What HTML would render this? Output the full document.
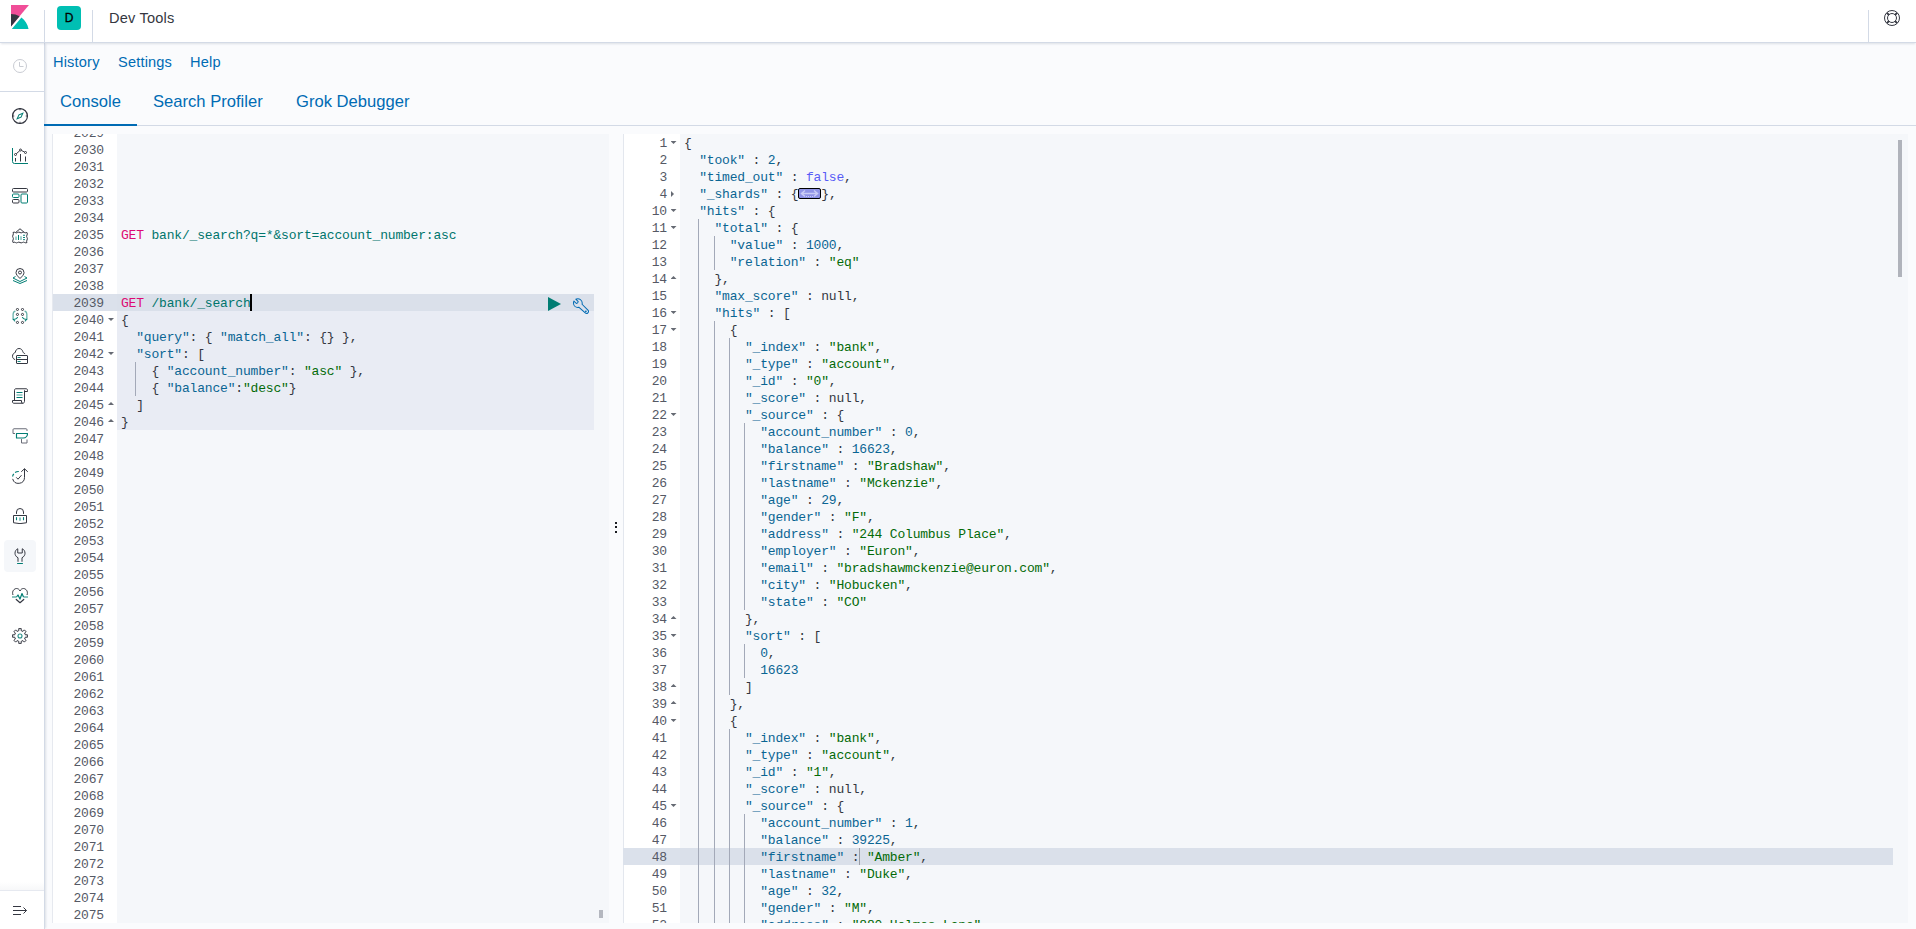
<!DOCTYPE html><html><head><meta charset="utf-8"><title>Dev Tools</title><style>
*{box-sizing:border-box;margin:0;padding:0}
html,body{width:1916px;height:929px;overflow:hidden;background:#fafbfd;font-family:"Liberation Sans",sans-serif;color:#343741}
.abs{position:absolute}
#hdr{position:absolute;left:0;top:0;width:1916px;height:43px;background:#fff;border-bottom:1px solid #d3dae6;box-shadow:0 2px 2px -1px rgba(152,162,179,.3);z-index:5}
.vsep{position:absolute;top:10px;width:1px;height:32px;background:#d3dae6}
#avatar{position:absolute;left:57px;top:6px;width:24px;height:24px;border-radius:4px;background:#00bfb3;color:#000;-webkit-text-stroke:.3px #000;font-size:12px;line-height:24px;text-align:center}
#title{position:absolute;left:109px;top:9px;letter-spacing:.18px;font-size:14.6px;line-height:18px;color:#343741;white-space:nowrap}
#side{position:absolute;left:0;top:43px;width:45px;height:886px;background:#fff;border-right:1px solid #d3dae6;box-shadow:2px 0 2px -1px rgba(152,162,179,.3);z-index:4}
.hline{position:absolute;left:0;width:44px;height:1px;background:#d3dae6}
.ico{position:absolute;left:12px;width:16px;height:16px}
.ico svg{display:block;width:16px;height:16px}
#selbg{position:absolute;left:4px;top:497px;width:32px;height:32px;border-radius:4px;background:#f5f7fa}
.lnk{position:absolute;top:53px;letter-spacing:.17px;font-size:14.6px;line-height:18px;color:#006bb4;white-space:nowrap}
.tab{position:absolute;top:92px;font-size:16.6px;line-height:20px;color:#006bb4;white-space:nowrap}
#tabline{position:absolute;left:45px;top:125px;width:1871px;height:1px;background:#d3dae6}
#tabsel{position:absolute;z-index:6;left:44px;top:124px;width:93px;height:2px;background:#006bb4}
.mono{font-family:"Liberation Mono",monospace;font-size:13px;letter-spacing:-0.18px;line-height:17px;white-space:pre}
.ed{position:absolute;overflow:hidden;background:#f5f7fa}
.gut{position:absolute;left:0;top:0;bottom:0;background:#fff}
.ln{position:absolute;height:17px;text-align:right;color:#555965;margin-top:1px}
.row{position:absolute;height:17px;color:#343741;margin-top:1px}
.hl{position:absolute;height:17px}
.guide{position:absolute;width:1px;background:#a3a9b8}
.fa{position:absolute;background:#666a73}
.fa.d{width:6px;height:3px;clip-path:polygon(0 0,100% 0,50% 100%)}
.fa.u{width:6px;height:3px;clip-path:polygon(0 100%,100% 100%,50% 0)}
.fa.r{width:3px;height:6px;clip-path:polygon(0 0,100% 50%,0 100%)}
.m{color:#dd0a73}.u{color:#00756c}.k{color:#0a6593}.s{color:#036a07}.n{color:#0a6593}.b{color:#585cf6}.p{color:#343741}
</style></head><body>
<div id="hdr">
<div class="abs" style="left:11px;top:5px;width:18px;height:24px"><svg viewBox="4 0 25 32" width="18" height="24" preserveAspectRatio="none"><path fill="#f04e98" d="M4 0v28.789L28.935.017z"/><path fill="#343741" d="M4 12v16.789l11.906-13.738A24.721 24.721 0 0 0 4 12"/><path fill="#00bfb3" d="M18.479 16.664L6.268 30.754l-1.073 1.237h23.191c-1.252-6.292-4.883-11.719-9.908-15.327"/></svg></div>
<div class="vsep" style="left:44px"></div>
<div id="avatar">D</div>
<div class="vsep" style="left:92px"></div>
<div id="title">Dev Tools</div>
<div class="vsep" style="left:1868px"></div>
<div class="abs" style="left:1884px;top:10px;width:16px;height:16px"><svg viewBox="0 0 16 16" width="16" height="16" fill="none" stroke="#343741" stroke-width="1"><circle cx="8" cy="8" r="7.5"/><circle cx="8" cy="8" r="4.5"/><path stroke-width="2" d="M2.9 2.9l2 2M13.1 2.9l-2 2M2.9 13.1l2-2M13.1 13.1l-2-2"/></svg></div>
</div>
<div id="side">
<div class="ico" style="top:15px;left:12px"><svg viewBox="0 0 16 16" fill="none" stroke="#c9ccd3" stroke-width="1"><circle cx="8" cy="8" r="6.5"/><path d="M7.5 4v4.5h4"/></svg></div>
<div class="hline" style="top:48px"></div>
<div id="selbg"></div>
<div class="ico" style="top:65px"><svg viewBox="0 0 32 32" ><g fill="none" stroke-width="2" stroke-linecap="butt" stroke-linejoin="round" stroke="#343741" ><circle cx="16" cy="16" r="14.900" stroke-width="2.300"/><path d="M16 1v3.500M16 27.500v3.500M1 16h3.500M27.500 16h3.500"/></g><path fill="#017d73" fill-rule="evenodd" d="M8.33 23.67l4.79-10.55 10.55-4.79-4.790 10.55-10.55 4.790zm6.300-9l-2.280 5 5-2.280 2.280-5-5 2.280z"/></svg></div>
<div class="ico" style="top:105px"><svg viewBox="0 0 32 32" ><g fill="none" stroke-width="2" stroke-linecap="butt" stroke-linejoin="round" stroke="#017d73" ><path d="M1 0v27a4 4 0 0 0 4 4h27"/></g><g fill="none" stroke-width="2" stroke-linecap="butt" stroke-linejoin="round" stroke="#343741" ><path d="M7 20v7M17 12v15M27 17v10"/><circle cx="7" cy="13" r="2"/><circle cx="17" cy="4" r="2"/><circle cx="27" cy="9" r="2"/><path d="M8.5 11.5l7-6M19 5l6.2 3.2"/></g></svg></div>
<div class="ico" style="top:145px"><svg viewBox="0 0 32 32" ><g fill="none" stroke-width="2" stroke-linecap="butt" stroke-linejoin="round" stroke="#343741" ><rect x="1" y="1" width="30" height="7" rx="2"/><rect x="1" y="23" width="13" height="7" rx="2"/></g><g fill="none" stroke-width="2" stroke-linecap="butt" stroke-linejoin="round" stroke="#017d73" ><rect x="1" y="12" width="13" height="7" rx="2"/><rect x="18" y="12" width="13" height="18" rx="2"/></g></svg></div>
<div class="ico" style="top:185px"><svg viewBox="0 0 32 32" ><g fill="none" stroke-width="2" stroke-linecap="butt" stroke-linejoin="round" stroke="#343741" ><path d="M8 8.500L16 1.500l8 7" stroke-linecap="round"/><path d="M2 9Q4.33 7.40 6.67 9.00Q9.00 10.60 11.33 9.00Q13.67 7.40 16.00 9.00Q18.33 10.60 20.67 9.00Q23.00 7.40 25.33 9.00Q27.67 10.60 30.00 9.00Q31.60 11.50 30.00 14.00Q28.40 16.50 30.00 19.00Q31.60 21.50 30.00 24.00Q28.40 26.50 30.00 29.00Q27.67 30.60 25.33 29.00Q23.00 27.40 20.67 29.00Q18.33 30.60 16.00 29.00Q13.67 27.40 11.33 29.00Q9.00 30.60 6.67 29.00Q4.33 27.40 2.00 29.00Q0.40 26.50 2.00 24.00Q3.60 21.50 2.00 19.00Q0.40 16.50 2.00 14.00Q3.60 11.50 2.00 9.00z" stroke-width="2"/></g><g fill="none" stroke-width="2" stroke-linecap="butt" stroke-linejoin="round" stroke="#017d73" ><path d="M8 17v7M18 16.500v7.500" stroke-opacity=".5" stroke-width="2.800"/><path d="M13 14v10" stroke-width="2"/><path d="M22 14.500h4M22 19h4M22 23.300h4" stroke-width="1.900"/></g></svg></div>
<div class="ico" style="top:225px"><svg viewBox="0 0 32 32" ><g fill="none" stroke-width="2" stroke-linecap="butt" stroke-linejoin="round" stroke="#343741" ><path d="M16 21c-5-5-8-8-8-12a8 8 0 0 1 16 0c0 4-3 7-8 12z"/><circle cx="16" cy="9" r="3"/></g><g fill="none" stroke-width="2" stroke-linecap="butt" stroke-linejoin="round" stroke="#017d73" ><path d="M7 17l-5 3 14 7 14-7-5-3"/><path d="M2 25l14 6 14-6"/></g></svg></div>
<div class="ico" style="top:265px"><svg viewBox="0 0 32 32" ><g fill="none" stroke-width="2" stroke-linecap="butt" stroke-linejoin="round" stroke="#343741" stroke-width="1.900"><circle cx="10.9" cy="2.9" r="2.100"/><circle cx="10.9" cy="12.9" r="2.100"/><circle cx="10.9" cy="28.9" r="2.100"/><circle cx="21" cy="2.9" r="2.100"/><circle cx="21" cy="12.9" r="2.100"/><circle cx="21" cy="28.9" r="2.100"/></g><g fill="none" stroke-width="2" stroke-linecap="butt" stroke-linejoin="round" stroke="#017d73" stroke-width="2.200"><g ><path d="M6 6.300Q2.200 8 2.200 12V22" stroke-opacity=".6" stroke-width="2.600" stroke-linecap="round"/><path d="M2.300 22.500L5.500 26M3.300 23Q8.500 22.500 11 19" stroke-linecap="round" stroke-width="2.200"/></g><g transform="translate(31.900 0) scale(-1 1)"><path d="M6 6.300Q2.200 8 2.200 12V22" stroke-opacity=".6" stroke-width="2.600" stroke-linecap="round"/><path d="M2.300 22.500L5.500 26M3.300 23Q8.500 22.500 11 19" stroke-linecap="round" stroke-width="2.200"/></g></g></svg></div>
<div class="ico" style="top:305px"><svg viewBox="0 0 32 32" ><g fill="none" stroke-width="2" stroke-linecap="butt" stroke-linejoin="round" stroke="#343741" ><path d="M5.500 23C2.500 22 1 19.500 1 16.500 1 12.500 3.500 10 6.500 9 7 4.500 10 1 14 1c4 0 6.500 2.500 7.500 6 .5 2 2 3.500 4 4.200" stroke-linecap="round"/><rect x="9" y="15" width="22" height="16" rx="1"/><path d="M9 23h22"/></g><g fill="none" stroke-width="2" stroke-linecap="butt" stroke-linejoin="round" stroke="#017d73" ><path d="M12 19h4.500M12 27h4.500" stroke-linecap="round" stroke-width="1.800"/></g></svg></div>
<div class="ico" style="top:345px"><svg viewBox="0 0 32 32" ><g fill="none" stroke-width="2" stroke-linecap="butt" stroke-linejoin="round" stroke="#343741" ><path d="M5 25V4.500c0-2 1-3 3-3h20c2 0 3 1 3 3V7h-6M25 4.500V27c0 2-1.500 3.500-3.500 3.500H4c-2 0-3-1-3-2.500V25h18v3c0 1.500 1 2.500 2.500 2.500"/></g><g fill="none" stroke-width="2" stroke-linecap="butt" stroke-linejoin="round" stroke="#017d73" ><path d="M9 9h12M9 19h12"/><path d="M9 14h12" stroke-opacity=".55" stroke-width="2.600"/></g></svg></div>
<div class="ico" style="top:385px"><svg viewBox="0 0 32 32" ><g fill="none" stroke-width="2" stroke-linecap="butt" stroke-linejoin="round" stroke="#6a6d78" ><path d="M6 11H2V3.500a2 2 0 0 1 2-2h24a2 2 0 0 1 2 2V6"/><path d="M19 22v8h11v-7"/></g><g fill="none" stroke-width="2" stroke-linecap="butt" stroke-linejoin="round" stroke="#017d73" ><path d="M9 11h22c0 5-3.500 9-8.500 9H9z" stroke-width="2.300"/></g></svg></div>
<div class="ico" style="top:425px"><svg viewBox="0 0 32 32" ><g fill="none" stroke-width="2" stroke-linecap="butt" stroke-linejoin="round" stroke="#343741" ><path d="M25 1.500V19A12 12 0 0 1 1.400 21.800M18.500 7.500L25 1.500l6.500 6"/><path d="M8.500 18.700l3.500 3.700 7-8"/></g><g fill="none" stroke-width="2" stroke-linecap="butt" stroke-linejoin="round" stroke="#017d73" ><path d="M1.200 17A12 12 0 0 1 3.600 11.800M6.200 9A12 12 0 0 1 13.600 7" stroke-width="2.400"/></g></svg></div>
<div class="ico" style="top:465px"><svg viewBox="0 0 32 32" ><g fill="none" stroke-width="2" stroke-linecap="butt" stroke-linejoin="round" stroke="#343741" ><path d="M9 11V8a7 7 0 0 1 14 0v3" stroke-linecap="round"/><path d="M3 15h26v14.500q-13 3.500-26 0z"/></g><g fill="none" stroke-width="2" stroke-linecap="butt" stroke-linejoin="round" stroke="#017d73" ><path d="M9 19v4.500M23 19v4.500" stroke-linecap="round" stroke-width="2.200"/><path d="M16 19v6.500" stroke-opacity=".55" stroke-width="3.400"/></g></svg></div>
<div class="ico" style="top:505px"><svg viewBox="0 0 32 32" ><g fill="none" stroke-width="2" stroke-linecap="butt" stroke-linejoin="round" stroke="#343741" ><path d="M12 27.500V19.500C8 17.500 6 14 6 10.500 6 6.500 8 3 11.500 1.500V10h9V1.500C24 3 26 6.500 26 10.500c0 3.500-2 7-6 9V27.500"/></g><g fill="none" stroke-width="2" stroke-linecap="butt" stroke-linejoin="round" stroke="#017d73" ><path d="M11 31h10" stroke-linecap="round"/></g></svg></div>
<div class="ico" style="top:545px"><svg viewBox="0 0 32 32" ><g fill="none" stroke-width="2" stroke-linecap="butt" stroke-linejoin="round" stroke="#343741" ><path d="M2 14C-1 6 5 1 9 1c3 0 6 2 7 5 1-3 4-5 7-5 4 0 10 5 7 13"/><path d="M8.500 23l7.500 6.500 7.500-6.500" stroke-width="2.400" stroke-linecap="round"/></g><g fill="none" stroke-width="2" stroke-linecap="butt" stroke-linejoin="round" stroke="#017d73" ><path d="M0 18h9M23 18h9" stroke-opacity=".6" stroke-width="3"/><path d="M9 18l3-4 4 8 4-11 3 7" stroke-width="2.400"/></g></svg></div>
<div class="ico" style="top:585px"><svg viewBox="0 0 32 32" ><g fill="none" stroke-width="2" stroke-linecap="butt" stroke-linejoin="round" stroke="#343741" ><path d="M13.42 1.22L18.58 1.22L18.23 5.23L22.04 6.81L24.63 3.73L28.27 7.37L25.19 9.96L26.77 13.77L30.78 13.42L30.78 18.58L26.77 18.23L25.19 22.04L28.27 24.63L24.63 28.27L22.04 25.19L18.23 26.77L18.58 30.78L13.42 30.78L13.77 26.77L9.96 25.19L7.37 28.27L3.73 24.63L6.81 22.04L5.23 18.23L1.22 18.58L1.22 13.42L5.23 13.77L6.81 9.96L3.73 7.37L7.37 3.73L9.96 6.81L13.77 5.23z"/></g><g fill="none" stroke-width="2" stroke-linecap="butt" stroke-linejoin="round" stroke="#017d73" ><circle cx="16" cy="16" r="4" stroke-width="2.200" stroke-opacity=".85"/></g></svg></div>
<div class="abs" style="left:0;top:839px;width:44px;height:8px;background:linear-gradient(to bottom,rgba(152,162,179,0),rgba(152,162,179,.08))"></div>
<div class="hline" style="top:847px;background:#e6e9f0"></div>
<div class="ico" style="top:860px;left:12px"><svg viewBox="0 0 16 16" fill="none" stroke="#343741" stroke-width="1"><path d="M1 3.500h8M1 7.500h13.500M1 11.500h8M11.500 4.500l3 3-3 3"/></svg></div>
</div>
<div class="lnk" style="left:53px">History</div>
<div class="lnk" style="left:118px">Settings</div>
<div class="lnk" style="left:190px">Help</div>
<div class="tab" style="left:60px">Console</div>
<div class="tab" style="left:153px">Search Profiler</div>
<div class="tab" style="left:296px">Grok Debugger</div>
<div id="tabline"></div><div id="tabsel"></div>
<div class="ed mono" style="left:52px;top:134px;width:557px;height:789px">
<div class="hl" style="left:65px;top:177px;width:477px;height:119px;background:#e9ecf4"></div>
<div class="hl" style="left:65px;top:160px;width:477px;background:#dae0ea"></div>
<div class="gut" style="width:65px;border-left:1px solid #e6e9ef"></div>
<div class="hl" style="left:1px;top:160px;width:64px;background:#dbe1eb"></div>
<div class="ln" style="left:0;top:-10px;width:52px">2029</div>
<div class="ln" style="left:0;top:7px;width:52px">2030</div>
<div class="ln" style="left:0;top:24px;width:52px">2031</div>
<div class="ln" style="left:0;top:41px;width:52px">2032</div>
<div class="ln" style="left:0;top:58px;width:52px">2033</div>
<div class="ln" style="left:0;top:75px;width:52px">2034</div>
<div class="ln" style="left:0;top:92px;width:52px">2035</div>
<div class="row" style="left:69.0px;top:92px"><span class="m">GET</span> <span class="u">bank/_search?q=*&amp;sort=account_number:asc</span></div>
<div class="ln" style="left:0;top:109px;width:52px">2036</div>
<div class="ln" style="left:0;top:126px;width:52px">2037</div>
<div class="ln" style="left:0;top:143px;width:52px">2038</div>
<div class="ln" style="left:0;top:160px;width:52px">2039</div>
<div class="row" style="left:69.0px;top:160px"><span class="m">GET</span> <span class="u">/bank/_search</span></div>
<div class="ln" style="left:0;top:177px;width:52px">2040</div>
<div class="fa d" style="left:56px;top:184px"></div>
<div class="row" style="left:69.0px;top:177px"><span class="p">{</span></div>
<div class="ln" style="left:0;top:194px;width:52px">2041</div>
<div class="row" style="left:69.0px;top:194px">  <span class="k">"query"</span><span class="p">: { </span><span class="k">"match_all"</span><span class="p">: {} },</span></div>
<div class="ln" style="left:0;top:211px;width:52px">2042</div>
<div class="fa d" style="left:56px;top:218px"></div>
<div class="row" style="left:69.0px;top:211px">  <span class="k">"sort"</span><span class="p">: [</span></div>
<div class="ln" style="left:0;top:228px;width:52px">2043</div>
<div class="row" style="left:69.0px;top:228px">    <span class="p">{ </span><span class="k">"account_number"</span><span class="p">: </span><span class="s">"asc"</span><span class="p"> },</span></div>
<div class="ln" style="left:0;top:245px;width:52px">2044</div>
<div class="row" style="left:69.0px;top:245px">    <span class="p">{ </span><span class="k">"balance"</span><span class="p">:</span><span class="s">"desc"</span><span class="p">}</span></div>
<div class="ln" style="left:0;top:262px;width:52px">2045</div>
<div class="fa u" style="left:56px;top:268px"></div>
<div class="row" style="left:69.0px;top:262px">  <span class="p">]</span></div>
<div class="ln" style="left:0;top:279px;width:52px">2046</div>
<div class="fa u" style="left:56px;top:285px"></div>
<div class="row" style="left:69.0px;top:279px"><span class="p">}</span></div>
<div class="ln" style="left:0;top:296px;width:52px">2047</div>
<div class="ln" style="left:0;top:313px;width:52px">2048</div>
<div class="ln" style="left:0;top:330px;width:52px">2049</div>
<div class="ln" style="left:0;top:347px;width:52px">2050</div>
<div class="ln" style="left:0;top:364px;width:52px">2051</div>
<div class="ln" style="left:0;top:381px;width:52px">2052</div>
<div class="ln" style="left:0;top:398px;width:52px">2053</div>
<div class="ln" style="left:0;top:415px;width:52px">2054</div>
<div class="ln" style="left:0;top:432px;width:52px">2055</div>
<div class="ln" style="left:0;top:449px;width:52px">2056</div>
<div class="ln" style="left:0;top:466px;width:52px">2057</div>
<div class="ln" style="left:0;top:483px;width:52px">2058</div>
<div class="ln" style="left:0;top:500px;width:52px">2059</div>
<div class="ln" style="left:0;top:517px;width:52px">2060</div>
<div class="ln" style="left:0;top:534px;width:52px">2061</div>
<div class="ln" style="left:0;top:551px;width:52px">2062</div>
<div class="ln" style="left:0;top:568px;width:52px">2063</div>
<div class="ln" style="left:0;top:585px;width:52px">2064</div>
<div class="ln" style="left:0;top:602px;width:52px">2065</div>
<div class="ln" style="left:0;top:619px;width:52px">2066</div>
<div class="ln" style="left:0;top:636px;width:52px">2067</div>
<div class="ln" style="left:0;top:653px;width:52px">2068</div>
<div class="ln" style="left:0;top:670px;width:52px">2069</div>
<div class="ln" style="left:0;top:687px;width:52px">2070</div>
<div class="ln" style="left:0;top:704px;width:52px">2071</div>
<div class="ln" style="left:0;top:721px;width:52px">2072</div>
<div class="ln" style="left:0;top:738px;width:52px">2073</div>
<div class="ln" style="left:0;top:755px;width:52px">2074</div>
<div class="ln" style="left:0;top:772px;width:52px">2075</div>
<div class="guide" style="left:83.2px;top:228px;height:34px"></div>
<div class="abs" style="left:198px;top:160px;width:2px;height:17px;background:#000"></div>
<div class="abs" style="left:496px;top:163px;width:13px;height:14px"><svg viewBox="0 0 13 14" width="13" height="14"><path fill="#017d73" d="M0 0l13 7-13 7z"/></svg></div>
<div class="abs" style="left:521px;top:164px;width:16px;height:16px"><svg viewBox="0 0 16 16" width="16" height="16"><g transform="translate(.5 .5) scale(.9375)"><path fill="none" stroke="#006bb4" stroke-width="1.070" stroke-linejoin="round" d="M5.918 9.370a4.660 4.660 0 0 1-1.253.176A4.672 4.672 0 0 1 0 4.873c0-.482.073-.955.215-1.407l.240-.763 2.609 2.615 1.348-.625.624-1.352L2.460.730 3.220.490a4.672 4.672 0 0 1 6.088 4.383 4.660 4.660 0 0 1-.171 1.253l6.262 6.277a2.040 2.040 0 0 1-2.880 2.886L5.918 9.370z"/><circle cx="13.170" cy="13.700" r=".95" fill="#006bb4"/></g></svg></div>
<div class="abs" style="left:547px;top:776px;width:4px;height:8px;background:#b4b7bf"></div>
</div>
<div class="abs" style="left:615px;top:522px;width:2px;height:2px;background:#1a1c21"></div>
<div class="abs" style="left:615px;top:526px;width:2px;height:2px;background:#1a1c21"></div>
<div class="abs" style="left:615px;top:531px;width:2px;height:2px;background:#1a1c21"></div>
<div class="ed mono" style="left:623px;top:134px;width:1285px;height:789px">
<div class="hl" style="left:57px;top:714px;width:1213px;background:#dae0ea"></div>
<div class="gut" style="width:57px;border-left:1px solid #e3e7ee"></div>
<div class="hl" style="left:0;top:714px;width:57px;background:#dbe1eb"></div>
<div class="ln" style="left:0;top:0px;width:44px">1</div>
<div class="fa d" style="left:47.5px;top:7px"></div>
<div class="row" style="left:61.00px;top:0px"><span class="p">{</span></div>
<div class="ln" style="left:0;top:17px;width:44px">2</div>
<div class="row" style="left:76.24px;top:17px"><span class="k">"took"</span><span class="p"> : </span><span class="n">2</span><span class="p">,</span></div>
<div class="ln" style="left:0;top:34px;width:44px">3</div>
<div class="row" style="left:76.24px;top:34px"><span class="k">"timed_out"</span><span class="p"> : </span><span class="b">false</span><span class="p">,</span></div>
<div class="ln" style="left:0;top:51px;width:44px">4</div>
<div class="fa r" style="left:48px;top:57px"></div>
<div class="row" style="left:76.24px;top:51px"><span class="k">"_shards"</span><span class="p"> : </span><span class="p">{</span><span style="display:inline-block;width:23px;height:11px;vertical-align:-1px;margin:0 0px;border:1px solid #000;border-radius:2px;background:#8f93e6;position:relative"><svg viewBox="0 0 21 9" width="21" height="9" style="position:absolute;left:0;top:0"><path d="M3 4.500h15M6 1.500l-3.500 3 3.500 3M15 1.500l3.500 3-3.500 3" fill="none" stroke="#c9cbf5" stroke-width="1.500"/><path d="M7 7.500h7" stroke="#c9cbf5" stroke-width="1" stroke-dasharray="1 1"/></svg></span><span class="p">},</span></div>
<div class="ln" style="left:0;top:68px;width:44px">10</div>
<div class="fa d" style="left:47.5px;top:75px"></div>
<div class="row" style="left:76.24px;top:68px"><span class="k">"hits"</span><span class="p"> : </span><span class="p">{</span></div>
<div class="ln" style="left:0;top:85px;width:44px">11</div>
<div class="fa d" style="left:47.5px;top:92px"></div>
<div class="row" style="left:91.48px;top:85px"><span class="k">"total"</span><span class="p"> : </span><span class="p">{</span></div>
<div class="guide" style="left:75.2px;top:85px;height:17px"></div>
<div class="ln" style="left:0;top:102px;width:44px">12</div>
<div class="row" style="left:106.72px;top:102px"><span class="k">"value"</span><span class="p"> : </span><span class="n">1000</span><span class="p">,</span></div>
<div class="guide" style="left:75.2px;top:102px;height:17px"></div>
<div class="guide" style="left:90.5px;top:102px;height:17px"></div>
<div class="ln" style="left:0;top:119px;width:44px">13</div>
<div class="row" style="left:106.72px;top:119px"><span class="k">"relation"</span><span class="p"> : </span><span class="s">"eq"</span></div>
<div class="guide" style="left:75.2px;top:119px;height:17px"></div>
<div class="guide" style="left:90.5px;top:119px;height:17px"></div>
<div class="ln" style="left:0;top:136px;width:44px">14</div>
<div class="fa u" style="left:47.5px;top:142px"></div>
<div class="row" style="left:91.48px;top:136px"><span class="p">},</span></div>
<div class="guide" style="left:75.2px;top:136px;height:17px"></div>
<div class="ln" style="left:0;top:153px;width:44px">15</div>
<div class="row" style="left:91.48px;top:153px"><span class="k">"max_score"</span><span class="p"> : </span><span class="p">null</span><span class="p">,</span></div>
<div class="guide" style="left:75.2px;top:153px;height:17px"></div>
<div class="ln" style="left:0;top:170px;width:44px">16</div>
<div class="fa d" style="left:47.5px;top:177px"></div>
<div class="row" style="left:91.48px;top:170px"><span class="k">"hits"</span><span class="p"> : </span><span class="p">[</span></div>
<div class="guide" style="left:75.2px;top:170px;height:17px"></div>
<div class="ln" style="left:0;top:187px;width:44px">17</div>
<div class="fa d" style="left:47.5px;top:194px"></div>
<div class="row" style="left:106.72px;top:187px"><span class="p">{</span></div>
<div class="guide" style="left:75.2px;top:187px;height:17px"></div>
<div class="guide" style="left:90.5px;top:187px;height:17px"></div>
<div class="ln" style="left:0;top:204px;width:44px">18</div>
<div class="row" style="left:121.96px;top:204px"><span class="k">"_index"</span><span class="p"> : </span><span class="s">"bank"</span><span class="p">,</span></div>
<div class="guide" style="left:75.2px;top:204px;height:17px"></div>
<div class="guide" style="left:90.5px;top:204px;height:17px"></div>
<div class="guide" style="left:105.7px;top:204px;height:17px"></div>
<div class="ln" style="left:0;top:221px;width:44px">19</div>
<div class="row" style="left:121.96px;top:221px"><span class="k">"_type"</span><span class="p"> : </span><span class="s">"account"</span><span class="p">,</span></div>
<div class="guide" style="left:75.2px;top:221px;height:17px"></div>
<div class="guide" style="left:90.5px;top:221px;height:17px"></div>
<div class="guide" style="left:105.7px;top:221px;height:17px"></div>
<div class="ln" style="left:0;top:238px;width:44px">20</div>
<div class="row" style="left:121.96px;top:238px"><span class="k">"_id"</span><span class="p"> : </span><span class="s">"0"</span><span class="p">,</span></div>
<div class="guide" style="left:75.2px;top:238px;height:17px"></div>
<div class="guide" style="left:90.5px;top:238px;height:17px"></div>
<div class="guide" style="left:105.7px;top:238px;height:17px"></div>
<div class="ln" style="left:0;top:255px;width:44px">21</div>
<div class="row" style="left:121.96px;top:255px"><span class="k">"_score"</span><span class="p"> : </span><span class="p">null</span><span class="p">,</span></div>
<div class="guide" style="left:75.2px;top:255px;height:17px"></div>
<div class="guide" style="left:90.5px;top:255px;height:17px"></div>
<div class="guide" style="left:105.7px;top:255px;height:17px"></div>
<div class="ln" style="left:0;top:272px;width:44px">22</div>
<div class="fa d" style="left:47.5px;top:279px"></div>
<div class="row" style="left:121.96px;top:272px"><span class="k">"_source"</span><span class="p"> : </span><span class="p">{</span></div>
<div class="guide" style="left:75.2px;top:272px;height:17px"></div>
<div class="guide" style="left:90.5px;top:272px;height:17px"></div>
<div class="guide" style="left:105.7px;top:272px;height:17px"></div>
<div class="ln" style="left:0;top:289px;width:44px">23</div>
<div class="row" style="left:137.20px;top:289px"><span class="k">"account_number"</span><span class="p"> : </span><span class="n">0</span><span class="p">,</span></div>
<div class="guide" style="left:75.2px;top:289px;height:17px"></div>
<div class="guide" style="left:90.5px;top:289px;height:17px"></div>
<div class="guide" style="left:105.7px;top:289px;height:17px"></div>
<div class="guide" style="left:121.0px;top:289px;height:17px"></div>
<div class="ln" style="left:0;top:306px;width:44px">24</div>
<div class="row" style="left:137.20px;top:306px"><span class="k">"balance"</span><span class="p"> : </span><span class="n">16623</span><span class="p">,</span></div>
<div class="guide" style="left:75.2px;top:306px;height:17px"></div>
<div class="guide" style="left:90.5px;top:306px;height:17px"></div>
<div class="guide" style="left:105.7px;top:306px;height:17px"></div>
<div class="guide" style="left:121.0px;top:306px;height:17px"></div>
<div class="ln" style="left:0;top:323px;width:44px">25</div>
<div class="row" style="left:137.20px;top:323px"><span class="k">"firstname"</span><span class="p"> : </span><span class="s">"Bradshaw"</span><span class="p">,</span></div>
<div class="guide" style="left:75.2px;top:323px;height:17px"></div>
<div class="guide" style="left:90.5px;top:323px;height:17px"></div>
<div class="guide" style="left:105.7px;top:323px;height:17px"></div>
<div class="guide" style="left:121.0px;top:323px;height:17px"></div>
<div class="ln" style="left:0;top:340px;width:44px">26</div>
<div class="row" style="left:137.20px;top:340px"><span class="k">"lastname"</span><span class="p"> : </span><span class="s">"Mckenzie"</span><span class="p">,</span></div>
<div class="guide" style="left:75.2px;top:340px;height:17px"></div>
<div class="guide" style="left:90.5px;top:340px;height:17px"></div>
<div class="guide" style="left:105.7px;top:340px;height:17px"></div>
<div class="guide" style="left:121.0px;top:340px;height:17px"></div>
<div class="ln" style="left:0;top:357px;width:44px">27</div>
<div class="row" style="left:137.20px;top:357px"><span class="k">"age"</span><span class="p"> : </span><span class="n">29</span><span class="p">,</span></div>
<div class="guide" style="left:75.2px;top:357px;height:17px"></div>
<div class="guide" style="left:90.5px;top:357px;height:17px"></div>
<div class="guide" style="left:105.7px;top:357px;height:17px"></div>
<div class="guide" style="left:121.0px;top:357px;height:17px"></div>
<div class="ln" style="left:0;top:374px;width:44px">28</div>
<div class="row" style="left:137.20px;top:374px"><span class="k">"gender"</span><span class="p"> : </span><span class="s">"F"</span><span class="p">,</span></div>
<div class="guide" style="left:75.2px;top:374px;height:17px"></div>
<div class="guide" style="left:90.5px;top:374px;height:17px"></div>
<div class="guide" style="left:105.7px;top:374px;height:17px"></div>
<div class="guide" style="left:121.0px;top:374px;height:17px"></div>
<div class="ln" style="left:0;top:391px;width:44px">29</div>
<div class="row" style="left:137.20px;top:391px"><span class="k">"address"</span><span class="p"> : </span><span class="s">"244 Columbus Place"</span><span class="p">,</span></div>
<div class="guide" style="left:75.2px;top:391px;height:17px"></div>
<div class="guide" style="left:90.5px;top:391px;height:17px"></div>
<div class="guide" style="left:105.7px;top:391px;height:17px"></div>
<div class="guide" style="left:121.0px;top:391px;height:17px"></div>
<div class="ln" style="left:0;top:408px;width:44px">30</div>
<div class="row" style="left:137.20px;top:408px"><span class="k">"employer"</span><span class="p"> : </span><span class="s">"Euron"</span><span class="p">,</span></div>
<div class="guide" style="left:75.2px;top:408px;height:17px"></div>
<div class="guide" style="left:90.5px;top:408px;height:17px"></div>
<div class="guide" style="left:105.7px;top:408px;height:17px"></div>
<div class="guide" style="left:121.0px;top:408px;height:17px"></div>
<div class="ln" style="left:0;top:425px;width:44px">31</div>
<div class="row" style="left:137.20px;top:425px"><span class="k">"email"</span><span class="p"> : </span><span class="s">"bradshawmckenzie@euron.com"</span><span class="p">,</span></div>
<div class="guide" style="left:75.2px;top:425px;height:17px"></div>
<div class="guide" style="left:90.5px;top:425px;height:17px"></div>
<div class="guide" style="left:105.7px;top:425px;height:17px"></div>
<div class="guide" style="left:121.0px;top:425px;height:17px"></div>
<div class="ln" style="left:0;top:442px;width:44px">32</div>
<div class="row" style="left:137.20px;top:442px"><span class="k">"city"</span><span class="p"> : </span><span class="s">"Hobucken"</span><span class="p">,</span></div>
<div class="guide" style="left:75.2px;top:442px;height:17px"></div>
<div class="guide" style="left:90.5px;top:442px;height:17px"></div>
<div class="guide" style="left:105.7px;top:442px;height:17px"></div>
<div class="guide" style="left:121.0px;top:442px;height:17px"></div>
<div class="ln" style="left:0;top:459px;width:44px">33</div>
<div class="row" style="left:137.20px;top:459px"><span class="k">"state"</span><span class="p"> : </span><span class="s">"CO"</span></div>
<div class="guide" style="left:75.2px;top:459px;height:17px"></div>
<div class="guide" style="left:90.5px;top:459px;height:17px"></div>
<div class="guide" style="left:105.7px;top:459px;height:17px"></div>
<div class="guide" style="left:121.0px;top:459px;height:17px"></div>
<div class="ln" style="left:0;top:476px;width:44px">34</div>
<div class="fa u" style="left:47.5px;top:482px"></div>
<div class="row" style="left:121.96px;top:476px"><span class="p">},</span></div>
<div class="guide" style="left:75.2px;top:476px;height:17px"></div>
<div class="guide" style="left:90.5px;top:476px;height:17px"></div>
<div class="guide" style="left:105.7px;top:476px;height:17px"></div>
<div class="ln" style="left:0;top:493px;width:44px">35</div>
<div class="fa d" style="left:47.5px;top:500px"></div>
<div class="row" style="left:121.96px;top:493px"><span class="k">"sort"</span><span class="p"> : </span><span class="p">[</span></div>
<div class="guide" style="left:75.2px;top:493px;height:17px"></div>
<div class="guide" style="left:90.5px;top:493px;height:17px"></div>
<div class="guide" style="left:105.7px;top:493px;height:17px"></div>
<div class="ln" style="left:0;top:510px;width:44px">36</div>
<div class="row" style="left:137.20px;top:510px"><span class="n">0</span><span class="p">,</span></div>
<div class="guide" style="left:75.2px;top:510px;height:17px"></div>
<div class="guide" style="left:90.5px;top:510px;height:17px"></div>
<div class="guide" style="left:105.7px;top:510px;height:17px"></div>
<div class="guide" style="left:121.0px;top:510px;height:17px"></div>
<div class="ln" style="left:0;top:527px;width:44px">37</div>
<div class="row" style="left:137.20px;top:527px"><span class="n">16623</span></div>
<div class="guide" style="left:75.2px;top:527px;height:17px"></div>
<div class="guide" style="left:90.5px;top:527px;height:17px"></div>
<div class="guide" style="left:105.7px;top:527px;height:17px"></div>
<div class="guide" style="left:121.0px;top:527px;height:17px"></div>
<div class="ln" style="left:0;top:544px;width:44px">38</div>
<div class="fa u" style="left:47.5px;top:550px"></div>
<div class="row" style="left:121.96px;top:544px"><span class="p">]</span></div>
<div class="guide" style="left:75.2px;top:544px;height:17px"></div>
<div class="guide" style="left:90.5px;top:544px;height:17px"></div>
<div class="guide" style="left:105.7px;top:544px;height:17px"></div>
<div class="ln" style="left:0;top:561px;width:44px">39</div>
<div class="fa u" style="left:47.5px;top:567px"></div>
<div class="row" style="left:106.72px;top:561px"><span class="p">},</span></div>
<div class="guide" style="left:75.2px;top:561px;height:17px"></div>
<div class="guide" style="left:90.5px;top:561px;height:17px"></div>
<div class="ln" style="left:0;top:578px;width:44px">40</div>
<div class="fa d" style="left:47.5px;top:585px"></div>
<div class="row" style="left:106.72px;top:578px"><span class="p">{</span></div>
<div class="guide" style="left:75.2px;top:578px;height:17px"></div>
<div class="guide" style="left:90.5px;top:578px;height:17px"></div>
<div class="ln" style="left:0;top:595px;width:44px">41</div>
<div class="row" style="left:121.96px;top:595px"><span class="k">"_index"</span><span class="p"> : </span><span class="s">"bank"</span><span class="p">,</span></div>
<div class="guide" style="left:75.2px;top:595px;height:17px"></div>
<div class="guide" style="left:90.5px;top:595px;height:17px"></div>
<div class="guide" style="left:105.7px;top:595px;height:17px"></div>
<div class="ln" style="left:0;top:612px;width:44px">42</div>
<div class="row" style="left:121.96px;top:612px"><span class="k">"_type"</span><span class="p"> : </span><span class="s">"account"</span><span class="p">,</span></div>
<div class="guide" style="left:75.2px;top:612px;height:17px"></div>
<div class="guide" style="left:90.5px;top:612px;height:17px"></div>
<div class="guide" style="left:105.7px;top:612px;height:17px"></div>
<div class="ln" style="left:0;top:629px;width:44px">43</div>
<div class="row" style="left:121.96px;top:629px"><span class="k">"_id"</span><span class="p"> : </span><span class="s">"1"</span><span class="p">,</span></div>
<div class="guide" style="left:75.2px;top:629px;height:17px"></div>
<div class="guide" style="left:90.5px;top:629px;height:17px"></div>
<div class="guide" style="left:105.7px;top:629px;height:17px"></div>
<div class="ln" style="left:0;top:646px;width:44px">44</div>
<div class="row" style="left:121.96px;top:646px"><span class="k">"_score"</span><span class="p"> : </span><span class="p">null</span><span class="p">,</span></div>
<div class="guide" style="left:75.2px;top:646px;height:17px"></div>
<div class="guide" style="left:90.5px;top:646px;height:17px"></div>
<div class="guide" style="left:105.7px;top:646px;height:17px"></div>
<div class="ln" style="left:0;top:663px;width:44px">45</div>
<div class="fa d" style="left:47.5px;top:670px"></div>
<div class="row" style="left:121.96px;top:663px"><span class="k">"_source"</span><span class="p"> : </span><span class="p">{</span></div>
<div class="guide" style="left:75.2px;top:663px;height:17px"></div>
<div class="guide" style="left:90.5px;top:663px;height:17px"></div>
<div class="guide" style="left:105.7px;top:663px;height:17px"></div>
<div class="ln" style="left:0;top:680px;width:44px">46</div>
<div class="row" style="left:137.20px;top:680px"><span class="k">"account_number"</span><span class="p"> : </span><span class="n">1</span><span class="p">,</span></div>
<div class="guide" style="left:75.2px;top:680px;height:17px"></div>
<div class="guide" style="left:90.5px;top:680px;height:17px"></div>
<div class="guide" style="left:105.7px;top:680px;height:17px"></div>
<div class="guide" style="left:121.0px;top:680px;height:17px"></div>
<div class="ln" style="left:0;top:697px;width:44px">47</div>
<div class="row" style="left:137.20px;top:697px"><span class="k">"balance"</span><span class="p"> : </span><span class="n">39225</span><span class="p">,</span></div>
<div class="guide" style="left:75.2px;top:697px;height:17px"></div>
<div class="guide" style="left:90.5px;top:697px;height:17px"></div>
<div class="guide" style="left:105.7px;top:697px;height:17px"></div>
<div class="guide" style="left:121.0px;top:697px;height:17px"></div>
<div class="ln" style="left:0;top:714px;width:44px">48</div>
<div class="row" style="left:137.20px;top:714px"><span class="k">"firstname"</span><span class="p"> : </span><span class="s">"Amber"</span><span class="p">,</span></div>
<div class="guide" style="left:75.2px;top:714px;height:17px"></div>
<div class="guide" style="left:90.5px;top:714px;height:17px"></div>
<div class="guide" style="left:105.7px;top:714px;height:17px"></div>
<div class="guide" style="left:121.0px;top:714px;height:17px"></div>
<div class="ln" style="left:0;top:731px;width:44px">49</div>
<div class="row" style="left:137.20px;top:731px"><span class="k">"lastname"</span><span class="p"> : </span><span class="s">"Duke"</span><span class="p">,</span></div>
<div class="guide" style="left:75.2px;top:731px;height:17px"></div>
<div class="guide" style="left:90.5px;top:731px;height:17px"></div>
<div class="guide" style="left:105.7px;top:731px;height:17px"></div>
<div class="guide" style="left:121.0px;top:731px;height:17px"></div>
<div class="ln" style="left:0;top:748px;width:44px">50</div>
<div class="row" style="left:137.20px;top:748px"><span class="k">"age"</span><span class="p"> : </span><span class="n">32</span><span class="p">,</span></div>
<div class="guide" style="left:75.2px;top:748px;height:17px"></div>
<div class="guide" style="left:90.5px;top:748px;height:17px"></div>
<div class="guide" style="left:105.7px;top:748px;height:17px"></div>
<div class="guide" style="left:121.0px;top:748px;height:17px"></div>
<div class="ln" style="left:0;top:765px;width:44px">51</div>
<div class="row" style="left:137.20px;top:765px"><span class="k">"gender"</span><span class="p"> : </span><span class="s">"M"</span><span class="p">,</span></div>
<div class="guide" style="left:75.2px;top:765px;height:17px"></div>
<div class="guide" style="left:90.5px;top:765px;height:17px"></div>
<div class="guide" style="left:105.7px;top:765px;height:17px"></div>
<div class="guide" style="left:121.0px;top:765px;height:17px"></div>
<div class="ln" style="left:0;top:782px;width:44px">52</div>
<div class="row" style="left:137.20px;top:782px"><span class="k">"address"</span><span class="p"> : </span><span class="s">"880 Holmes Lane"</span><span class="p">,</span></div>
<div class="guide" style="left:75.2px;top:782px;height:17px"></div>
<div class="guide" style="left:90.5px;top:782px;height:17px"></div>
<div class="guide" style="left:105.7px;top:782px;height:17px"></div>
<div class="guide" style="left:121.0px;top:782px;height:17px"></div>
<div class="abs" style="left:236px;top:714px;width:1px;height:17px;background:#9a9da6"></div>
<div class="abs" style="left:1275px;top:6px;width:4px;height:137px;background:#b0b3bb"></div>
</div>
</body></html>
